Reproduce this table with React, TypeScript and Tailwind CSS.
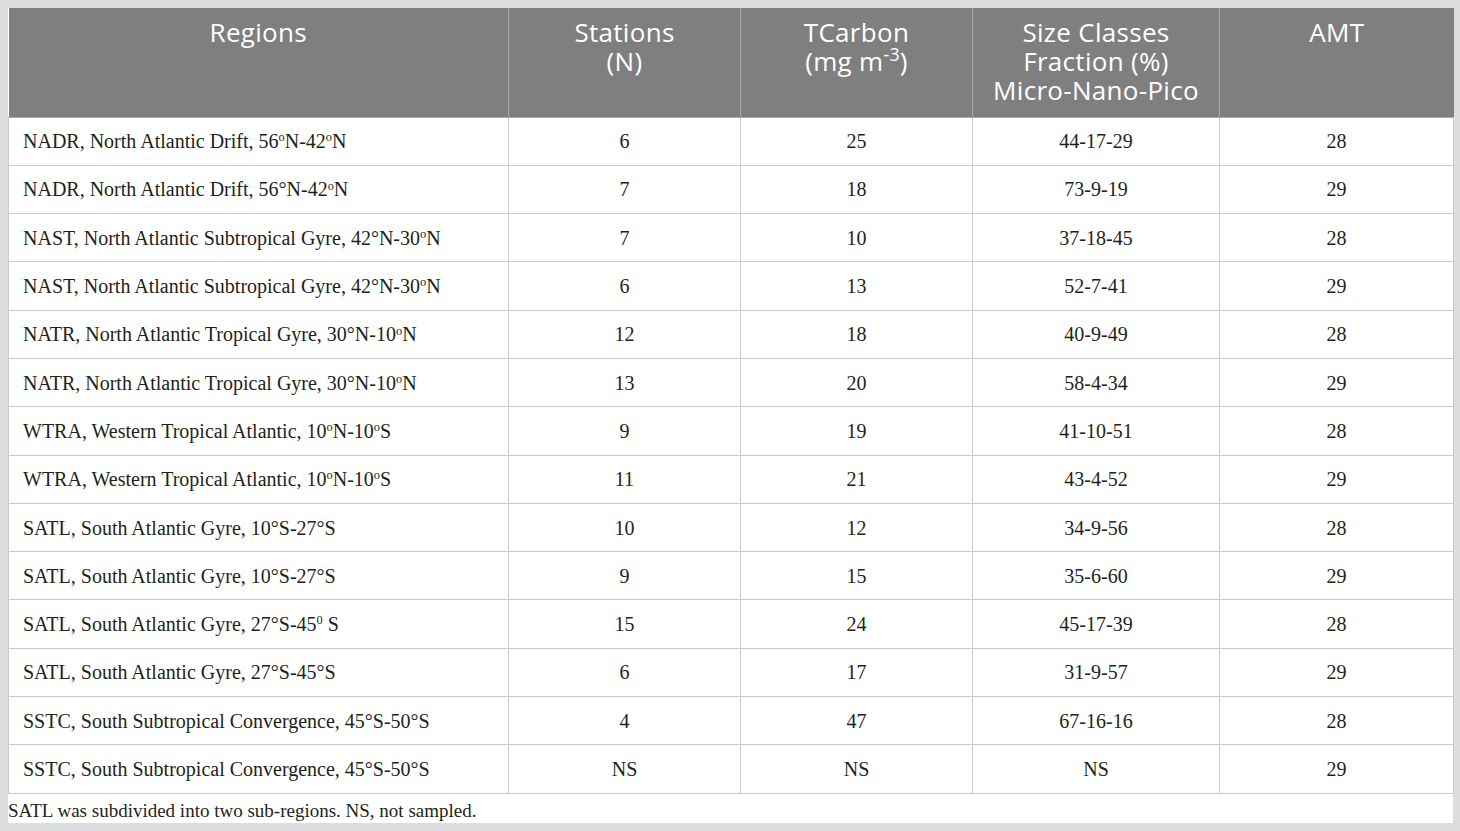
import React from "react";

type Row = { region: React.ReactNode; n: string; c: string; s: string; amt: string };

const O = () => <sup className="text-[0.62em] relative -top-[0.55em]">o</sup>;

const rows: Row[] = [
  { region: <>NADR, North Atlantic Drift, 56<O />N-42<O />N</>, n: "6", c: "25", s: "44-17-29", amt: "28" },
  { region: <>NADR, North Atlantic Drift, 56°N-42<O />N</>, n: "7", c: "18", s: "73-9-19", amt: "29" },
  { region: <>NAST, North Atlantic Subtropical Gyre, 42°N-30<O />N</>, n: "7", c: "10", s: "37-18-45", amt: "28" },
  { region: <>NAST, North Atlantic Subtropical Gyre, 42°N-30<O />N</>, n: "6", c: "13", s: "52-7-41", amt: "29" },
  { region: <>NATR, North Atlantic Tropical Gyre, 30°N-10<O />N</>, n: "12", c: "18", s: "40-9-49", amt: "28" },
  { region: <>NATR, North Atlantic Tropical Gyre, 30°N-10<O />N</>, n: "13", c: "20", s: "58-4-34", amt: "29" },
  { region: <>WTRA, Western Tropical Atlantic, 10<O />N-10<O />S</>, n: "9", c: "19", s: "41-10-51", amt: "28" },
  { region: <>WTRA, Western Tropical Atlantic, 10<O />N-10<O />S</>, n: "11", c: "21", s: "43-4-52", amt: "29" },
  { region: <>SATL, South Atlantic Gyre, 10°S-27°S</>, n: "10", c: "12", s: "34-9-56", amt: "28" },
  { region: <>SATL, South Atlantic Gyre, 10°S-27°S</>, n: "9", c: "15", s: "35-6-60", amt: "29" },
  { region: <>SATL, South Atlantic Gyre, 27°S-45<sup className="text-[0.62em] relative -top-[0.55em]">0</sup> S</>, n: "15", c: "24", s: "45-17-39", amt: "28" },
  { region: <>SATL, South Atlantic Gyre, 27°S-45°S</>, n: "6", c: "17", s: "31-9-57", amt: "29" },
  { region: <>SSTC, South Subtropical Convergence, 45°S-50°S</>, n: "4", c: "47", s: "67-16-16", amt: "28" },
  { region: <>SSTC, South Subtropical Convergence, 45°S-50°S</>, n: "NS", c: "NS", s: "NS", amt: "29" },
];

export default function App() {
  const th = "align-top text-center font-normal px-3 pt-[10px] pb-0 border-r border-[#a9a9a9] last:border-r-0";
  const td = "border-b border-r border-[#c9c9c9] text-center align-middle";
  return (
    <div className="w-[1460px] h-[831px] bg-[#dcdddf] pt-[8px] pl-[8px]">
      <div className="w-[1445px] bg-white">
        <table className="table-fixed border-collapse w-[1445px]">
          <colgroup>
            <col className="w-[500px]" />
            <col className="w-[232px]" />
            <col className="w-[232px]" />
            <col className="w-[247px]" />
            <col className="w-[234px]" />
          </colgroup>
          <thead>
            <tr className="bg-[#7f7f7f] text-white text-[26px] leading-[29px] tracking-[0.3px] h-[109px] border-b border-[#a9a9a9]" style={{ fontFamily: '"Open Sans", "Noto Sans", sans-serif' }}>
              <th className={th}>Regions</th>
              <th className={th}>Stations<br />(N)</th>
              <th className={th}>TCarbon<br />(mg m<sup className="text-[0.68em] relative -top-[0.55em]">-3</sup>)</th>
              <th className={th}>Size Classes<br />Fraction (%)<br />Micro-Nano-Pico</th>
              <th className={th}>AMT</th>
            </tr>
          </thead>
          <tbody className="text-[20px] text-[#231f20] leading-[24px]" style={{ fontFamily: '"Liberation Serif", "DejaVu Serif", serif' }}>
            {rows.map((r, i) => (
              <tr key={i} className="h-[48.3px]">
                <td className={`${td} text-left pl-[14px] border-l`}>{r.region}</td>
                <td className={td}>{r.n}</td>
                <td className={td}>{r.c}</td>
                <td className={td}>{r.s}</td>
                <td className={td}>{r.amt}</td>
              </tr>
            ))}
          </tbody>
        </table>
        <div className="h-[29px] flex items-end pb-[1px] text-[19px] leading-[22px] text-[#231f20] pl-[0px]" style={{ fontFamily: '"Liberation Serif", "DejaVu Serif", serif' }}>
          SATL was subdivided into two sub-regions. NS, not sampled.
        </div>
      </div>
    </div>
  );
}
